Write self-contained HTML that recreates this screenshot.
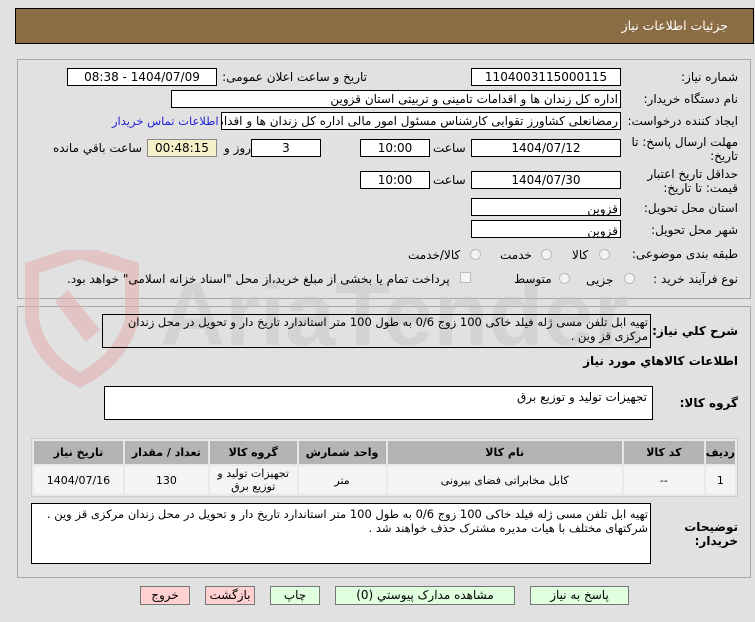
<!DOCTYPE html>
<html><head><meta charset="utf-8"><style>
*{box-sizing:border-box;margin:0;padding:0}
body{width:755px;height:622px;background:#e1e1e1;font-family:"DejaVu Sans","Liberation Sans",sans-serif;font-size:11.5px;color:#000;position:relative;overflow:hidden;direction:rtl}
.a{position:absolute;white-space:nowrap}
.box{position:absolute;background:#fff;border:1px solid #000;text-align:center;font-size:12px;line-height:16px;overflow:hidden}
.lbl{position:absolute;font-size:12px;white-space:nowrap;text-align:right}
.panel{position:absolute;border:1px solid #a8a8a8}
.rad{position:absolute;width:11px;height:11px;border:1px solid #bbb;border-radius:50%;background:#f4f4f4}
.btn{position:absolute;border:1px solid #777;font-size:12px;text-align:center;line-height:17px}
table{border-collapse:separate;border-spacing:2px;position:absolute;left:31px;top:438px;width:707px;background:#e8e8e8;border:1px solid #ccc;direction:ltr}
td{text-align:center;font-size:11px}
</style></head><body>
<div class="a" style="left:15px;top:8px;width:739px;height:36px;background:#8b6d45;border:1px solid #000"></div>
<div class="a" style="right:27px;top:18px;color:#fff;font-size:12.5px">جزئیات اطلاعات نیاز</div>

<div class="panel" style="left:17px;top:59px;width:734px;height:240px"></div>
<div class="panel" style="left:17px;top:306px;width:734px;height:272px"></div>

<!-- watermark -->
<svg class="a" style="left:20px;top:250px" width="620" height="140">
<path d="M12 18 L60 2 L112 18 L112 70 Q100 110 60 130 Q20 110 12 70 Z" fill="none" stroke="#e3b0b0" stroke-width="14" opacity=".6"/>
<path d="M48 40 L80 80 L66 92 L35 52 Z" fill="#e3b0b0" opacity=".6"/>
<text x="140" y="95" font-family="Liberation Sans" font-weight="bold" font-size="90" fill="#c4c4c4" opacity=".45" direction="ltr">AriaTender.net</text>
</svg>

<div class="lbl" style="right:17px;top:70px">شماره نیاز:</div>
<div class="box" style="left:471px;top:68px;width:150px;height:18px">1104003115000115</div>
<div class="lbl" style="right:388px;top:70px">تاریخ و ساعت اعلان عمومی:</div>
<div class="box" style="left:67px;top:68px;width:150px;height:18px">1404/07/09 - 08:38</div>

<div class="lbl" style="right:17px;top:92px">نام دستگاه خریدار:</div>
<div class="box" style="left:171px;top:90px;width:450px;height:18px;text-align:right;padding-right:2px">اداره کل زندان ها و اقدامات تامینی و تربیتی استان قزوین</div>

<div class="lbl" style="right:17px;top:114px">ایجاد کننده درخواست:</div>
<div class="box" style="left:221px;top:112px;width:400px;height:18px;text-align:right;padding-right:2px;white-space:nowrap">رمضانعلی کشاورز تقوایی کارشناس مسئول امور مالی  اداره کل زندان ها و اقدامات تامینی</div>
<div class="a" style="left:112px;top:114px;color:#2222dd;font-size:11.5px">اطلاعات تماس خریدار</div>

<div class="lbl" style="right:17px;top:135px;line-height:14px">مهلت ارسال پاسخ: تا<br>تاریخ:</div>
<div class="box" style="left:471px;top:139px;width:150px;height:18px">1404/07/12</div>
<div class="lbl" style="left:433px;top:141px">ساعت</div>
<div class="box" style="left:360px;top:139px;width:70px;height:18px">10:00</div>
<div class="box" style="left:251px;top:139px;width:70px;height:18px">3</div>
<div class="lbl" style="left:224px;top:141px">روز و</div>
<div class="box" style="left:147px;top:139px;width:70px;height:18px;background:#f5f0c8;border-color:#888">00:48:15</div>
<div class="lbl" style="left:53px;top:141px">ساعت باقي مانده</div>

<div class="lbl" style="right:17px;top:167px;line-height:14px">حداقل تاریخ اعتبار<br>قیمت: تا تاریخ:</div>
<div class="box" style="left:471px;top:171px;width:150px;height:18px">1404/07/30</div>
<div class="lbl" style="left:433px;top:173px">ساعت</div>
<div class="box" style="left:360px;top:171px;width:70px;height:18px">10:00</div>

<div class="lbl" style="right:17px;top:201px">استان محل تحویل:</div>
<div class="box" style="left:471px;top:198px;width:150px;height:18px;text-align:right;padding-right:2px;line-height:20px">قزوین</div>
<div class="lbl" style="right:17px;top:223px">شهر محل تحویل:</div>
<div class="box" style="left:471px;top:220px;width:150px;height:18px;text-align:right;padding-right:2px;line-height:20px">قزوین</div>

<div class="lbl" style="right:17px;top:247px">طبقه بندی موضوعی:</div>
<div class="rad" style="left:599px;top:249px"></div><div class="lbl" style="left:572px;top:248px">کالا</div>
<div class="rad" style="left:541px;top:249px"></div><div class="lbl" style="left:500px;top:248px">خدمت</div>
<div class="rad" style="left:470px;top:249px"></div><div class="lbl" style="left:408px;top:248px">کالا/خدمت</div>

<div class="lbl" style="right:17px;top:272px">نوع فرآیند خرید :</div>
<div class="rad" style="left:624px;top:273px"></div><div class="lbl" style="left:586px;top:273px">جزیی</div>
<div class="rad" style="left:559px;top:273px"></div><div class="lbl" style="left:514px;top:272px">متوسط</div>
<div class="a" style="left:460px;top:272px;width:11px;height:11px;border:1px solid #bbb;background:#f4f4f4"></div>
<div class="lbl" style="left:67px;top:272px">پرداخت تمام یا بخشی از مبلغ خرید،از محل "اسناد خزانه اسلامی" خواهد بود.</div>

<div class="lbl" style="right:17px;top:324px;font-weight:bold;font-size:12px">شرح كلي نياز:</div>
<div class="box" style="left:102px;top:314px;width:549px;height:34px;text-align:right;padding-right:2px;white-space:normal;line-height:14px;background:transparent;font-size:11.5px">تهیه ابل تلفن مسی ژله فیلد خاکی 100 زوج 0/6 به طول 100 متر استاندارد تاریخ دار و تحویل در محل زندان مرکزی قز وین .</div>
<div class="lbl" style="right:17px;top:354px;font-weight:bold;font-size:12px">اطلاعات كالاهاي مورد نياز</div>

<div class="lbl" style="right:17px;top:396px;font-weight:bold;font-size:12px">گروه کالا:</div>
<div class="box" style="left:104px;top:386px;width:549px;height:34px;text-align:right;padding-right:5px;line-height:14px;padding-top:3px">تجهیزات تولید و توزیع برق</div>

<table>
<tr style="background:#b4b4b4;height:23px;font-weight:bold">
<td style="width:89px">تاریخ نیاز</td><td style="width:83px">تعداد / مقدار</td><td style="width:87px">گروه کالا</td><td style="width:87px">واحد شمارش</td><td style="width:235px">نام کالا</td><td style="width:80px">کد کالا</td><td>ردیف</td></tr>
<tr style="background:#f4f4f4;height:28px">
<td>1404/07/16</td><td>130</td><td style="line-height:13px;direction:rtl">تجهیزات تولید و<br>توزیع برق</td><td>متر</td><td>کابل مخابراتی فضای بیرونی</td><td>--</td><td>1</td></tr>
</table>

<div class="lbl" style="right:17px;top:520px;font-weight:bold;font-size:12px;line-height:14px">توضیحات<br>خریدار:</div>
<div class="box" style="left:31px;top:503px;width:620px;height:61px;text-align:right;padding-right:2px;white-space:normal;line-height:14px;padding-top:3px;font-size:11.5px">تهیه ابل تلفن مسی ژله فیلد خاکی 100 زوج 0/6 به طول 100 متر استاندارد تاریخ دار و تحویل در محل زندان مرکزی قز وین .<br>شرکتهای مختلف با هیات مدیره مشترک حذف خواهند شد .</div>

<div class="btn" style="left:530px;top:586px;width:99px;height:19px;background:#dfffdf">پاسخ به نیاز</div>
<div class="btn" style="left:335px;top:586px;width:180px;height:19px;background:#dfffdf">مشاهده مدارک پیوستي (0)</div>
<div class="btn" style="left:270px;top:586px;width:50px;height:19px;background:#dfffdf">چاپ</div>
<div class="btn" style="left:205px;top:586px;width:50px;height:19px;background:#ffd0d0">بازگشت</div>
<div class="btn" style="left:140px;top:586px;width:50px;height:19px;background:#ffd0d0">خروج</div>
</body></html>
